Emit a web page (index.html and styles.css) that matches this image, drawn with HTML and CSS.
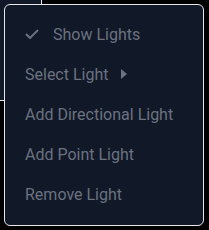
FILE: index.html
```html
<!DOCTYPE html>
<html>
<head>
<meta charset="utf-8">
<link rel="stylesheet" href="styles.css">
</head>
<body>
<div class="panel"></div>
<div class="menu">
  <div class="item"><span class="check"><svg width="14" height="10" viewBox="0 0 14 10"><path d="M1 5 L5 9 L13 1" fill="none" stroke="currentColor" stroke-width="2"/></svg></span>Show Lights</div>
  <div class="item">Select Light<span class="arrow"></span></div>
  <div class="item">Add Directional Light</div>
  <div class="item">Add Point Light</div>
  <div class="item">Remove Light</div>
</div>
</body>
</html>
```
FILE: styles.css
```css
html, body {
  margin: 0;
  padding: 0;
  background: #000;
  width: 209px;
  height: 230px;
  overflow: hidden;
}
.panel {
  width: 41px;
  height: 100px;
  background: #111827;
  border-right: 1px solid #e5e7eb;
  border-bottom: 1px solid #e5e7eb;
}
.menu {
  position: absolute;
  left: 4px;
  top: 4px;
  width: 200px;
  height: 222px;
  box-sizing: border-box;
  border: 1px solid #e5e7eb;
  border-radius: 6px;
  background: #111827;
  padding: 9px 0 11px;
  display: flex;
  flex-direction: column;
  font-family: Roboto, "Liberation Sans", sans-serif;
  font-size: 16px;
  color: #6b7280;
}
.item {
  height: 40px;
  display: flex;
  align-items: center;
  padding-left: 20px;
}
.check {
  width: 28px;
  display: flex;
  align-items: center;
}
.arrow {
  width: 0;
  height: 0;
  margin-left: 13px;
  border-left: 6px solid #6b7280;
  border-top: 5px solid transparent;
  border-bottom: 5px solid transparent;
}
```
